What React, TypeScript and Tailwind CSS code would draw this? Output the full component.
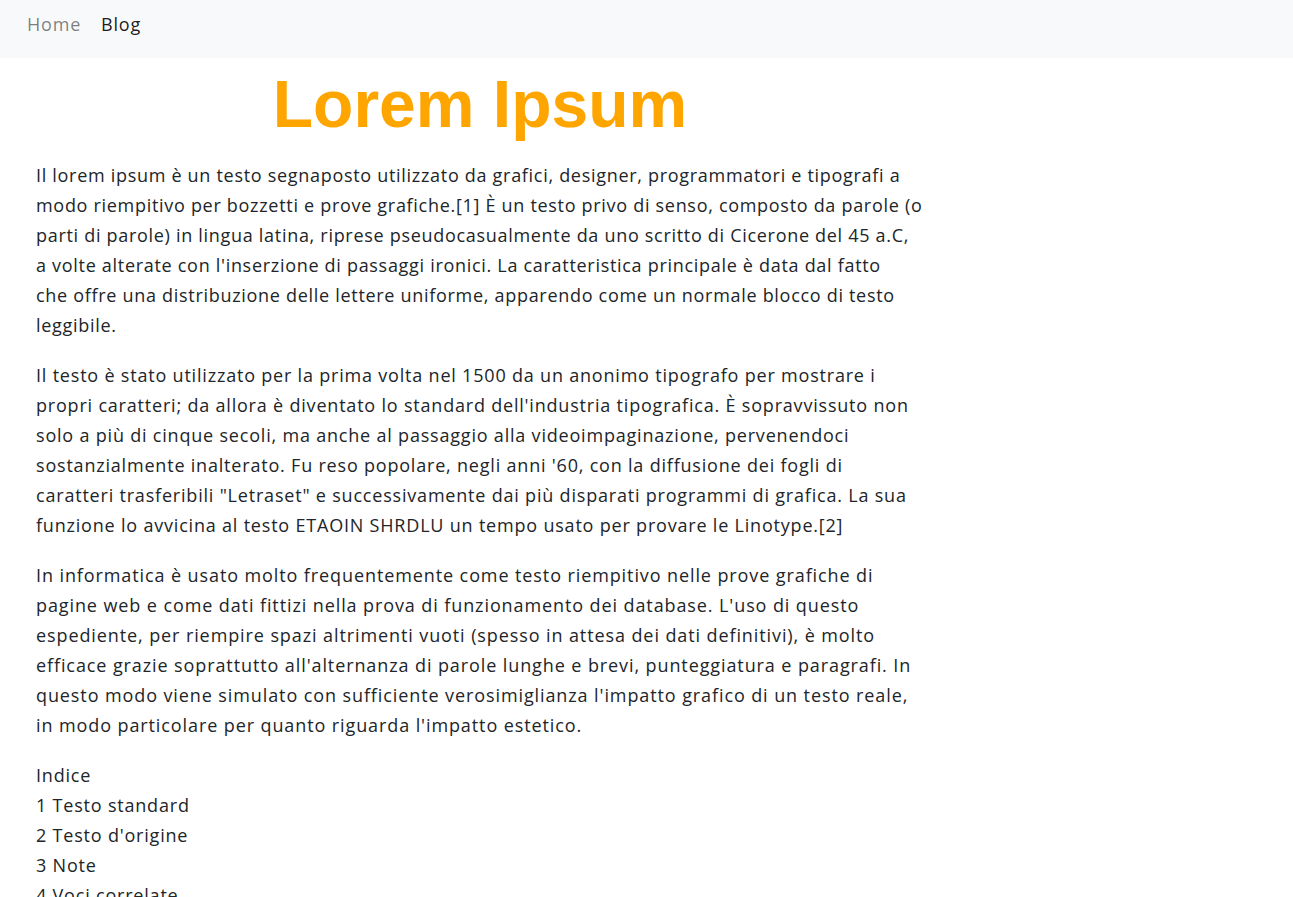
export default function App() {
  return (
    <div className="min-h-screen bg-white text-[#212529] tracking-[0.8px]" style={{ fontFamily: "'Open Sans', sans-serif" }}>
      <nav className="flex h-[58px] items-start bg-[#f8f9fa] px-[17px] pt-[11px] text-[18px]">
        <a className="px-[10px] text-black/50">Home</a>
        <a className="px-[10px] text-black/90">Blog</a>
      </nav>
      <main className="w-[888px] pl-[36px] box-content">
        <h1 className="mb-[18px] mt-[8px] text-center font-['Liberation_Sans',Arial,sans-serif] text-[66px] font-bold leading-[76px] tracking-normal text-[#ffa500]">
          Lorem Ipsum
        </h1>
        <div className="text-[18px] leading-[30px]">
          <p className="mb-[20px] tracking-[0.7px]">
            Il lorem ipsum è un testo segnaposto utilizzato da grafici, designer, programmatori e tipografi a modo riempitivo per bozzetti e prove grafiche.[1] È un testo privo di senso, composto da parole (o parti di parole) in lingua latina, riprese pseudocasualmente da uno scritto di Cicerone del 45 a.C, a{"\u00a0"}volte alterate con l'inserzione di passaggi ironici. La caratteristica principale è data dal fatto che{"\u00a0"}offre una distribuzione delle lettere uniforme, apparendo come un normale blocco di testo leggibile.
          </p>
          <p className="mb-[20px]">
            Il testo è stato utilizzato per la prima volta nel 1500 da un anonimo tipografo per mostrare i propri caratteri; da allora è diventato lo standard dell'industria tipografica. È sopravvissuto non solo a più di cinque secoli, ma anche al passaggio alla videoimpaginazione, pervenendoci sostanzialmente inalterato. Fu reso popolare, negli anni '60, con la diffusione dei fogli di caratteri trasferibili "Letraset" e successivamente dai più disparati programmi di grafica. La sua funzione lo avvicina al testo ETAOIN SHRDLU un tempo usato per provare le Linotype.[2]
          </p>
          <p className="mb-[20px] tracking-[0.9px]">
            In informatica è usato molto frequentemente come testo riempitivo nelle prove grafiche di pagine web e come dati fittizi nella prova di funzionamento dei database. L'uso di questo espediente, per riempire spazi altrimenti vuoti (spesso in attesa dei dati definitivi), è molto efficace grazie soprattutto all'alternanza di parole lunghe e brevi, punteggiatura e paragrafi. In questo modo viene simulato con sufficiente verosimiglianza l'impatto grafico di un testo reale, in modo particolare per quanto riguarda l'impatto estetico.
          </p>
          <div>
            <div>Indice</div>
            <div>1 Testo standard</div>
            <div>2 Testo d'origine</div>
            <div>3 Note</div>
            <div>4 Voci correlate</div>
            <div>5 Altri progetti</div>
          </div>
        </div>
      </main>
    </div>
  );
}
